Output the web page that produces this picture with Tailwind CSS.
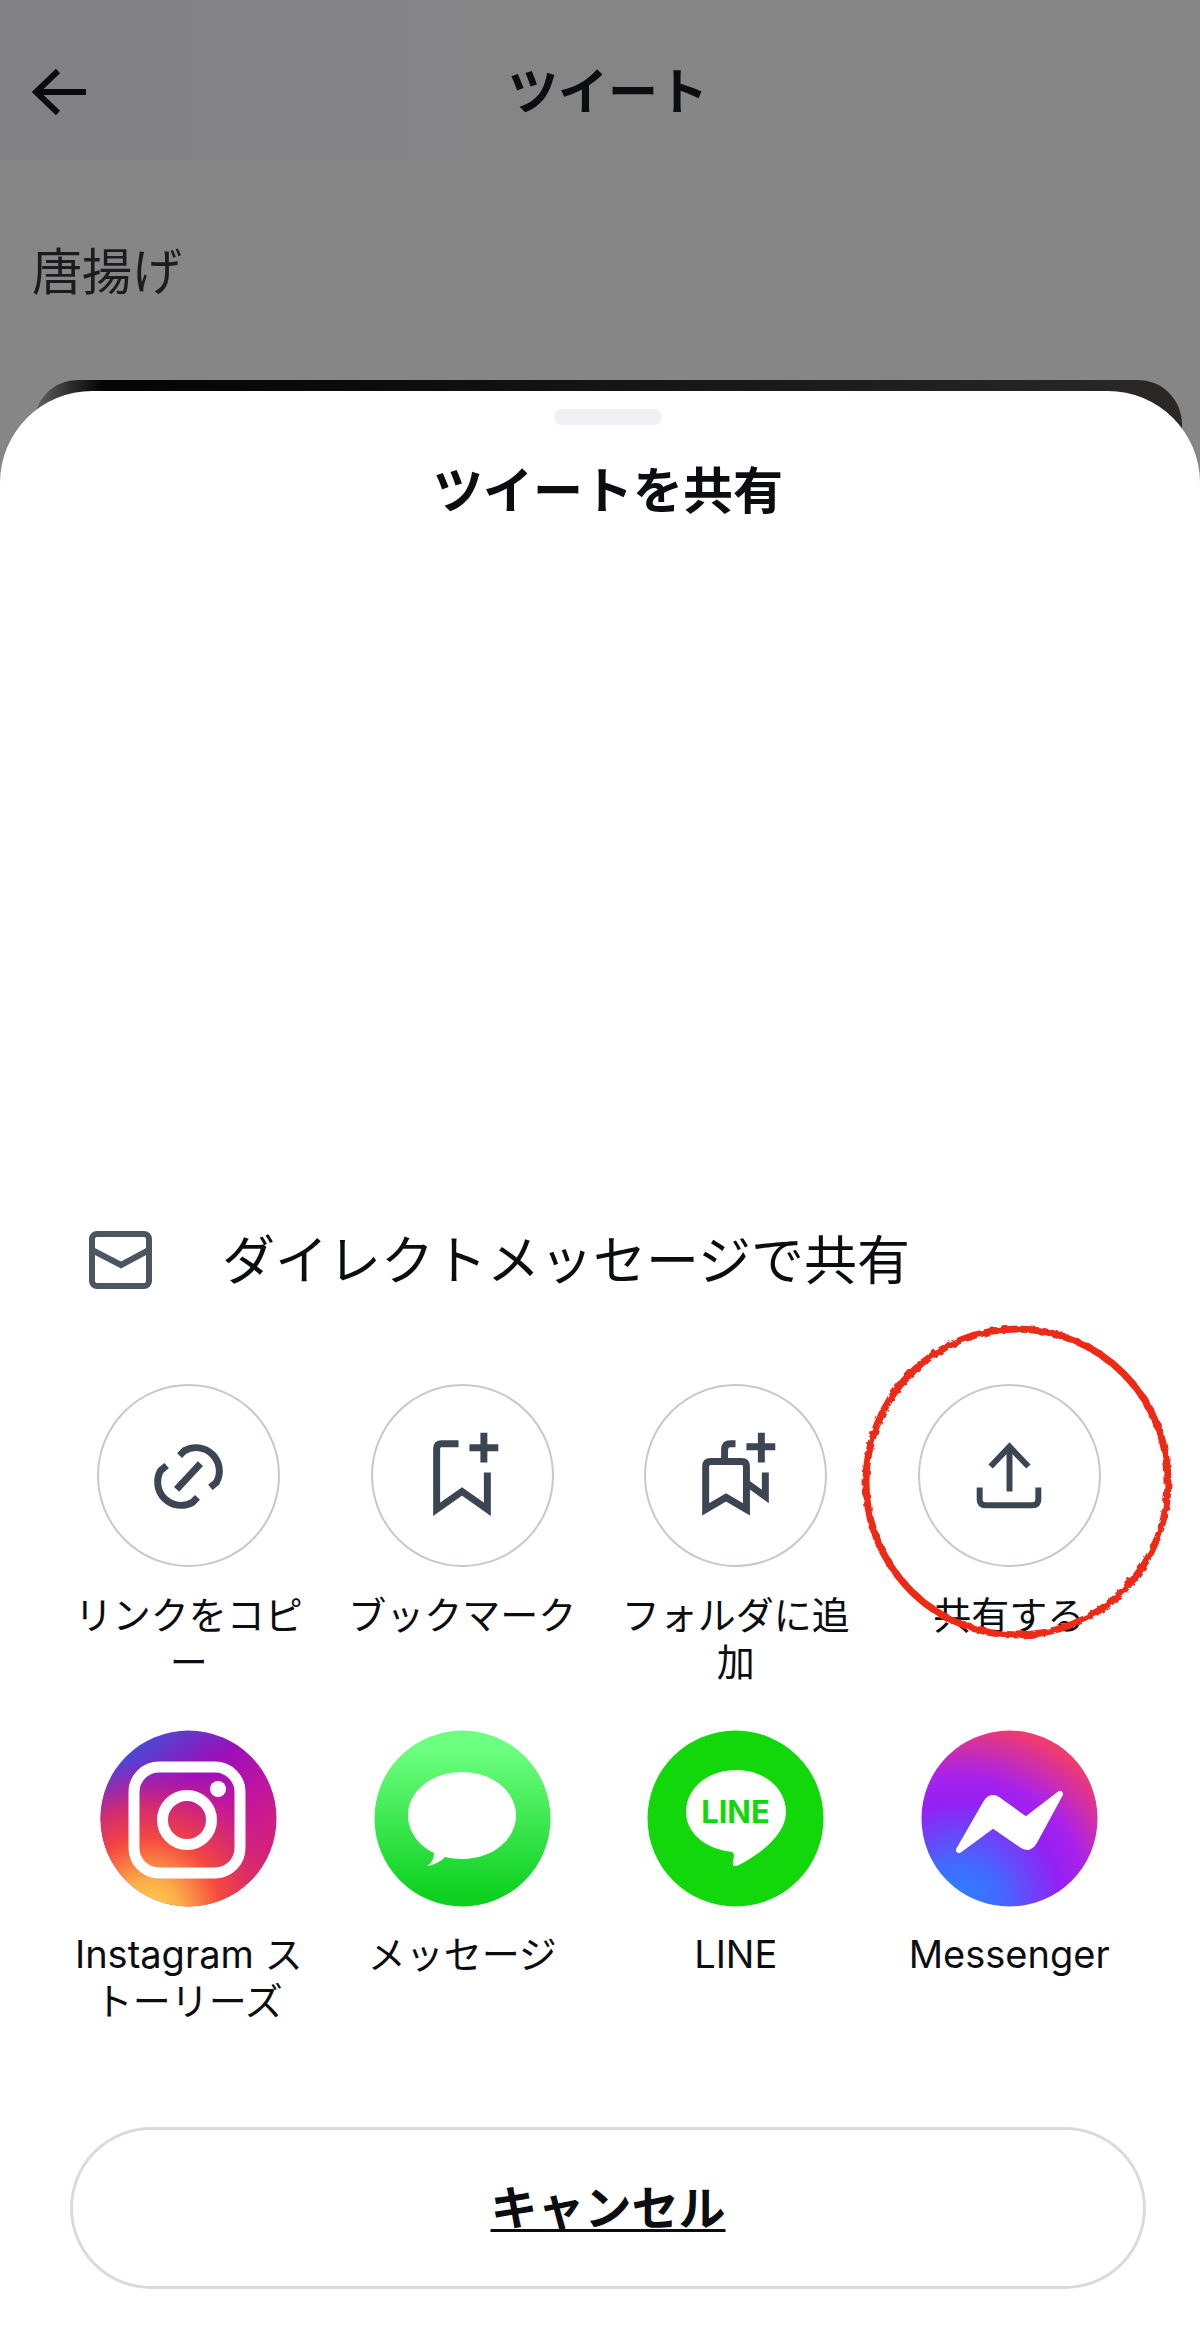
<!DOCTYPE html>
<html lang="ja">
  <head>
    <meta charset="UTF-8" />
    <meta name="viewport" content="width=device-width, initial-scale=1.0" />
    <title>ツイートを共有</title>
    <script src="https://cdn.jsdelivr.net/npm/@tailwindcss/browser@4"></script>
  </head>
  <body
    class="flex min-h-screen flex-col bg-[#868686] font-[Inter,'Noto_Sans_CJK_JP',sans-serif] text-[#0b0d10]"
  >
    <!-- Tweet behind the sheet -->
    <header
      class="grid h-[160px] grid-cols-[96px_1fr_80px] items-center bg-linear-to-r from-[#818084] via-[#848385] via-30% to-[#868686] to-60% pt-6"
    >
      <a href="#" aria-label="戻る" class="pl-8">
        <svg class="h-[52px] w-[56px]" viewBox="0 0 56 52" fill="none" stroke="#0b0b0e" stroke-width="6">
          <path d="M26 5 4 26l22 21M4 26h50" />
        </svg>
      </a>
      <h1 class="text-center text-[50px] leading-[60px] font-bold">ツイート</h1>
    </header>
    <p class="h-[220px] px-8 pt-20 text-[50px] leading-[64px] text-[#1c1c1e]">唐揚げ</p>
    <div
      class="mr-[18px] ml-[34px] h-[110px] rounded-t-[44px] bg-linear-to-r from-[#666] via-[#050505] via-6% to-[#2c2827]"
    ></div>

    <!-- Share sheet -->
    <main class="-mt-[99px] flex flex-1 flex-col rounded-t-[92px] bg-white pt-[18px] pb-[54px]">
      <div class="flex flex-col items-center gap-[34px] pl-4">
        <div class="h-4 w-[108px] rounded-full bg-[#eff1f4]"></div>
        <h2 class="text-[50px] leading-[64px] font-bold">ツイートを共有</h2>
      </div>

      <div class="min-h-20 flex-1"></div>

      <a href="#" class="flex h-20 items-center gap-[68px] pl-[88px]">
        <svg class="h-[60px] w-[66px]" viewBox="0 0 66 60" fill="none" stroke="#4b5661" stroke-width="6">
          <rect x="4" y="3" width="57" height="52" rx="5" />
          <path d="m4 19 29 15 28-15" />
        </svg>
        <span class="text-[53px] leading-[64px]">ダイレクトメッセージで共有</span>
      </a>

      <div
        class="mt-[83px] grid grid-cols-4 gap-y-11 pr-[54px] pl-[52px] text-[38px] leading-[47px] [line-break:anywhere]"
      >
        <button class="flex flex-col items-center gap-[25px]">
          <svg class="size-[183px] rounded-full border-2 border-[#c5c9ce]" viewBox="1 1 180 180" fill="none" stroke="#3b4652" stroke-width="7">
            <path d="m82 71 5-5a23.5 23.5 0 0 1 32 32l-6 5M100 113l-5 5a23.5 23.5 0 0 1-32-32l6-5M103 79l-24 26" />
          </svg>
          <span class="h-[94px] w-[240px]">リンクをコピー</span>
        </button>
        <button class="flex flex-col items-center gap-[25px]">
          <svg class="size-[183px] rounded-full border-2 border-[#c5c9ce]" viewBox="1 1 180 180" fill="none" stroke="#3b4652" stroke-width="7">
            <path d="M87 59H70q-5 0-5 5v61l25.5-18 25.5 18V88M98 63h29M112.500 48v30" />
          </svg>
          <span class="h-[94px] w-[240px]">ブックマーク</span>
        </button>
        <button class="flex flex-col items-center gap-[25px]">
          <svg class="size-[183px] rounded-full border-2 border-[#c5c9ce]" viewBox="1 1 180 180" fill="none" stroke="#3b4652" stroke-width="7">
            <path d="M61 125V82q0-5 5-5h31q5 0 5 5v43l-20.5-12zM80 76V65q0-6 6-6h5M103 99l18 13V88M102 62h29M117 48v30" />
          </svg>
          <span class="h-[94px] w-[240px]">フォルダに追加</span>
        </button>
        <button class="relative flex flex-col items-center gap-[25px]">
          <svg class="size-[183px] rounded-full border-2 border-[#c5c9ce]" viewBox="1 1 180 180" fill="none" stroke="#3b4652" stroke-width="6">
            <path d="M91 107V61M72 82l19-20 19 20M61 103v12q0 6 6 6h47q6 0 6-6v-12" />
          </svg>
          <span class="h-[94px] w-[240px]">共有する</span>
          <!-- Hand-drawn marker ring -->
          <svg class="pointer-events-none absolute -top-[65px] left-1/2 -ml-[157px] h-[326px] w-[330px]" viewBox="0 0 330 326" fill="none">
            <filter id="rough" x="-5%" y="-5%" width="110%" height="110%">
              <feTurbulence type="fractalNoise" baseFrequency="0.14" numOctaves="2" seed="4" />
              <feDisplacementMap in="SourceGraphic" scale="5" />
            </filter>
            <ellipse cx="165" cy="163" rx="151" ry="153" stroke="#ee2a17" stroke-width="7" filter="url(#rough)" />
          </svg>
        </button>

        <button class="flex flex-col items-center gap-6">
          <svg class="size-[177px]" viewBox="0 0 177 177" fill="none" stroke="#fff" stroke-width="11">
            <defs>
              <linearGradient id="igBase" x1="0" y1="0" x2=".75" y2="1">
                <stop offset=".15" stop-color="#4a4ad4" />
                <stop offset=".42" stop-color="#9a10bb" />
                <stop offset=".65" stop-color="#c214a0" />
                <stop offset="1" stop-color="#e02a60" />
              </linearGradient>
              <radialGradient id="igWarm" cx=".28" cy="1.02" r=".85">
                <stop offset="0" stop-color="#ffd254" />
                <stop offset=".2" stop-color="#fcae48" />
                <stop offset=".48" stop-color="#f4483f" />
                <stop offset=".7" stop-color="#dc2f64" stop-opacity=".85" />
                <stop offset="1" stop-color="#c016a4" stop-opacity="0" />
              </radialGradient>
            </defs>
            <circle cx="88.5" cy="88.5" r="88" fill="url(#igBase)" stroke="none" />
            <circle cx="88.5" cy="88.5" r="88" fill="url(#igWarm)" stroke="none" />
            <rect x="34" y="37" width="106" height="106" rx="25" />
            <circle cx="87" cy="90" r="24.5" />
            <circle cx="118" cy="59" r="8" fill="#fff" stroke="none" />
          </svg>
          <span class="h-[94px] w-[240px]">Instagram ストーリーズ</span>
        </button>
        <button class="flex flex-col items-center gap-6">
          <svg class="size-[177px]" viewBox="0 0 177 177">
            <linearGradient id="msg" x1="0" y1="0" x2="0" y2="1">
              <stop offset=".1" stop-color="#6dff80" />
              <stop offset=".85" stop-color="#17d52a" />
              <stop offset="1" stop-color="#0bce1c" />
            </linearGradient>
            <circle cx="88.5" cy="88.5" r="88" fill="url(#msg)" />
            <path fill="#fff" d="M88 42c30 0 54 19 54 43.5S118 129 88 129c-6 0-12-1-17-2-5 5-11 8-18 9 5-3 7-8 7-13-16-8-26-22-26-37.5C34 61 58 42 88 42z" />
          </svg>
          <span class="h-[94px] w-[240px]">メッセージ</span>
        </button>
        <button class="flex flex-col items-center gap-6">
          <svg class="size-[177px]" viewBox="0 0 177 177">
            <circle cx="88.5" cy="88.5" r="88" fill="#12d80b" />
            <path fill="#fff" d="M89 40c28 0 50 18 50 42 0 22-24 41-47 53-4 2-7 1-6-3l1-6c0-3-1-4-5-4.5C57 118 39 102 39 82c0-24 22-42 50-42z" />
            <text x="88.5" y="93" text-anchor="middle" font-size="31" font-weight="700" fill="#12d80b">LINE</text>
          </svg>
          <span class="h-[94px] w-[240px]">LINE</span>
        </button>
        <button class="flex flex-col items-center gap-6">
          <svg class="size-[177px]" viewBox="0 0 177 177">
            <radialGradient id="fbm" cx=".22" cy=".98" r="1.1">
              <stop offset="0" stop-color="#2a84ff" />
              <stop offset=".22" stop-color="#4468ff" />
              <stop offset=".52" stop-color="#9420f4" />
              <stop offset=".66" stop-color="#a822ea" />
              <stop offset=".93" stop-color="#f03a72" />
            </radialGradient>
            <circle cx="88.5" cy="88.5" r="88" fill="url(#fbm)" />
            <path fill="#fff" stroke="#fff" stroke-width="6" stroke-linejoin="round" d="M38 120 65 73q5-8 12-3l28 20 34-26-26 48q-5 8-12 3L72 95z" />
          </svg>
          <span class="h-[94px] w-[240px]">Messenger</span>
        </button>
      </div>

      <button
        class="mt-[102px] mr-[54px] ml-[70px] h-[162px] rounded-full border-[3px] border-[#dadada] text-[47px] leading-[60px] font-bold underline decoration-3 underline-offset-4"
      >
        キャンセル
      </button>
    </main>
  </body>
</html>
